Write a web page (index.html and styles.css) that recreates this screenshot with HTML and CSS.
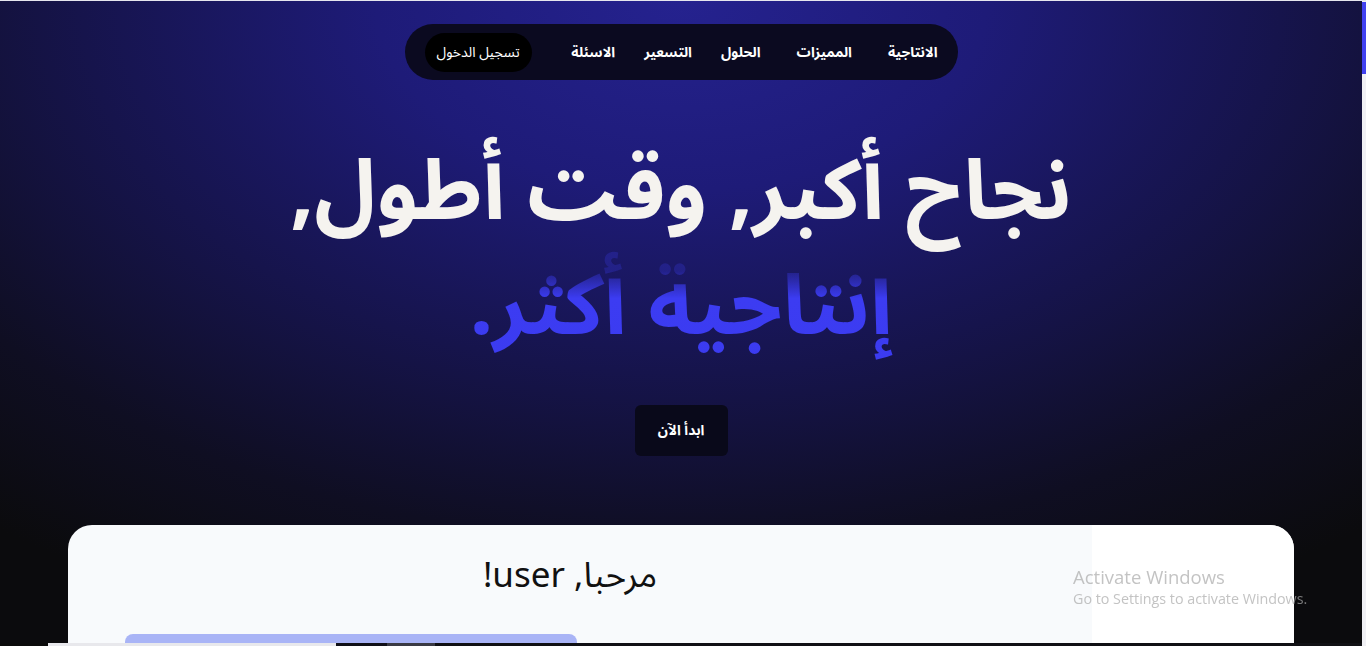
FILE: index.html
```html
<!DOCTYPE html>
<html lang="ar">
<head>
<meta charset="utf-8">
<title>الانتاجية</title>
<link rel="stylesheet" href="styles.css">
</head>
<body>
<div class="page">
  <header class="top">
    <nav class="nav">
      <a class="nav-link" href="#">الانتاجية</a>
      <a class="nav-link" href="#">المميزات</a>
      <a class="nav-link" href="#">الحلول</a>
      <a class="nav-link" href="#">التسعير</a>
      <a class="nav-link" href="#">الاسئلة</a>
      <a class="nav-login" href="#">تسجيل الدخول</a>
    </nav>
  </header>
  <section class="hero">
    <h1 class="hero-title">
      <span class="line-1">نجاح أكبر, وقت أطول,</span>
      <span class="line-2">إنتاجية أكثر.</span>
    </h1>
    <a class="cta" href="#">ابدأ الآن</a>
  </section>
  <section class="card">
    <div class="card-side"></div>
    <div class="card-main">
      <h2 class="welcome">مرحبا, user!</h2>
      <div class="tiles">
        <div class="tile"></div>
        <div class="tile-empty"></div>
      </div>
    </div>
  </section>
</div>
<div class="scrollbar"><div class="scroll-thumb"></div></div>
<div class="topline"></div>
<div class="hbar">
  <div class="hbar-a"></div>
  <div class="hbar-b"></div>
  <div class="hbar-c"></div>
  <div class="hbar-d"></div>
  <div class="hbar-e"></div>
</div>
<div class="watermark">
  <div class="wm-title">Activate Windows</div>
  <div class="wm-sub">Go to Settings to activate Windows.</div>
</div>
</body>
</html>
```
FILE: styles.css
```css
html, body {
  margin: 0;
  padding: 0;
  height: 646px;
  overflow: hidden;
  background: #0b0b0d;
}

body {
  font-family: "Noto Sans Arabic", "Noto Kufi Arabic", "DejaVu Sans", sans-serif;
  color: #fff;
}

.page {
  width: 1362px;
  height: 646px;
  direction: rtl;
  background:
    radial-gradient(ellipse 80% 105% at 50% 0%, #25228f 0%, #1e1b78 28%, #16144c 55%, #0f0e22 80%, #0b0b0d 100%);
  display: flex;
  flex-direction: column;
  align-items: center;
}

.top {
  padding-top: 24px;
  display: flex;
  justify-content: center;
}

.nav {
  height: 56px;
  width: 553px;
  box-sizing: border-box;
  background: #0b0a20;
  border-radius: 28px;
  display: flex;
  align-items: center;
  padding: 0 20px;
  gap: 29px;
}

.nav-link {
  color: #fff;
  text-decoration: none;
  font-weight: 700;
  font-size: 14px;
}

.nav-link:first-child {
  margin-left: 7px;
}

.nav-link:nth-child(2) {
  margin-left: 7px;
}

.nav-login {
  margin-right: auto;
  background: #000;
  color: #fff;
  text-decoration: none;
  font-size: 14px;
  height: 39px;
  padding: 0 12px;
  border-radius: 20px;
  display: flex;
  align-items: center;
}

.hero {
  display: flex;
  flex-direction: column;
  align-items: center;
}

.hero-title {
  margin: 55px 0 0;
  font-size: 84px;
  font-weight: 700;
  line-height: 115px;
  text-align: center;
}

.line-1 {
  display: block;
  color: #f5f3ef;
}

.line-2 {
  display: block;
  background: linear-gradient(to bottom, rgba(60, 60, 240, 0.25) 18%, #3c3cf2 42%, #3b3bf0 100%);
  -webkit-background-clip: text;
  background-clip: text;
  color: transparent;
}

.cta {
  margin-top: 40px;
  width: 93px;
  height: 51px;
  background: #09091a;
  color: #fff;
  border-radius: 6px;
  text-decoration: none;
  font-weight: 700;
  font-size: 14px;
  display: flex;
  align-items: center;
  justify-content: center;
}

.card {
  margin-top: auto;
  width: 1226px;
  height: 121px;
  border-radius: 24px 24px 0 0;
  background: #f8fafc;
  display: flex;
  overflow: hidden;
}

.card-side {
  width: 202px;
  flex: none;
  background: #ffffff;
}

.card-main {
  flex: 1;
  display: flex;
  flex-direction: column;
  align-items: center;
}

.welcome {
  margin: 30px 20px 0 0;
  font-weight: 400;
  font-size: 35px;
  line-height: 42px;
  color: #111;
  font-family: "Noto Sans Arabic", "Noto Sans", "DejaVu Sans", sans-serif;
}

.tiles {
  margin-top: auto;
  align-self: stretch;
  padding: 0 57px;
  display: flex;
  gap: 10px;
  direction: ltr;
}

.tile {
  width: 452px;
  height: 12px;
  background: #a9b4f6;
  border-radius: 8px 8px 0 0;
}

.tile-empty {
  flex: 1;
}

.scrollbar {
  position: fixed;
  top: 0;
  right: 0;
  width: 4px;
  height: 646px;
  background: #f0f0f4;
}

.scroll-thumb {
  margin-top: 2px;
  height: 72px;
  background: #4141f0;
}

.topline {
  position: fixed;
  top: 0;
  left: 0;
  right: 0;
  height: 1px;
  background: #e6e6ee;
}

.hbar {
  position: fixed;
  left: 0;
  bottom: 0;
  width: 1362px;
  height: 3px;
  display: flex;
  background: #101014;
}

.hbar-a { width: 48px; background: #0b0b0b; }
.hbar-b { width: 288px; background: #e8e8ec; }
.hbar-c { width: 51px; background: #101018; }
.hbar-d { width: 48px; background: #3a3a44; }
.hbar-e { flex: 1; background: #101014; }

.watermark {
  position: fixed;
  left: 1073px;
  top: 565px;
  color: rgba(170, 170, 170, 0.7);
  font-family: "Open Sans", "Noto Sans", sans-serif;
  pointer-events: none;
}

.wm-title {
  font-size: 18.5px;
  line-height: 24px;
}

.wm-sub {
  font-size: 14.3px;
  line-height: 20px;
}
```
